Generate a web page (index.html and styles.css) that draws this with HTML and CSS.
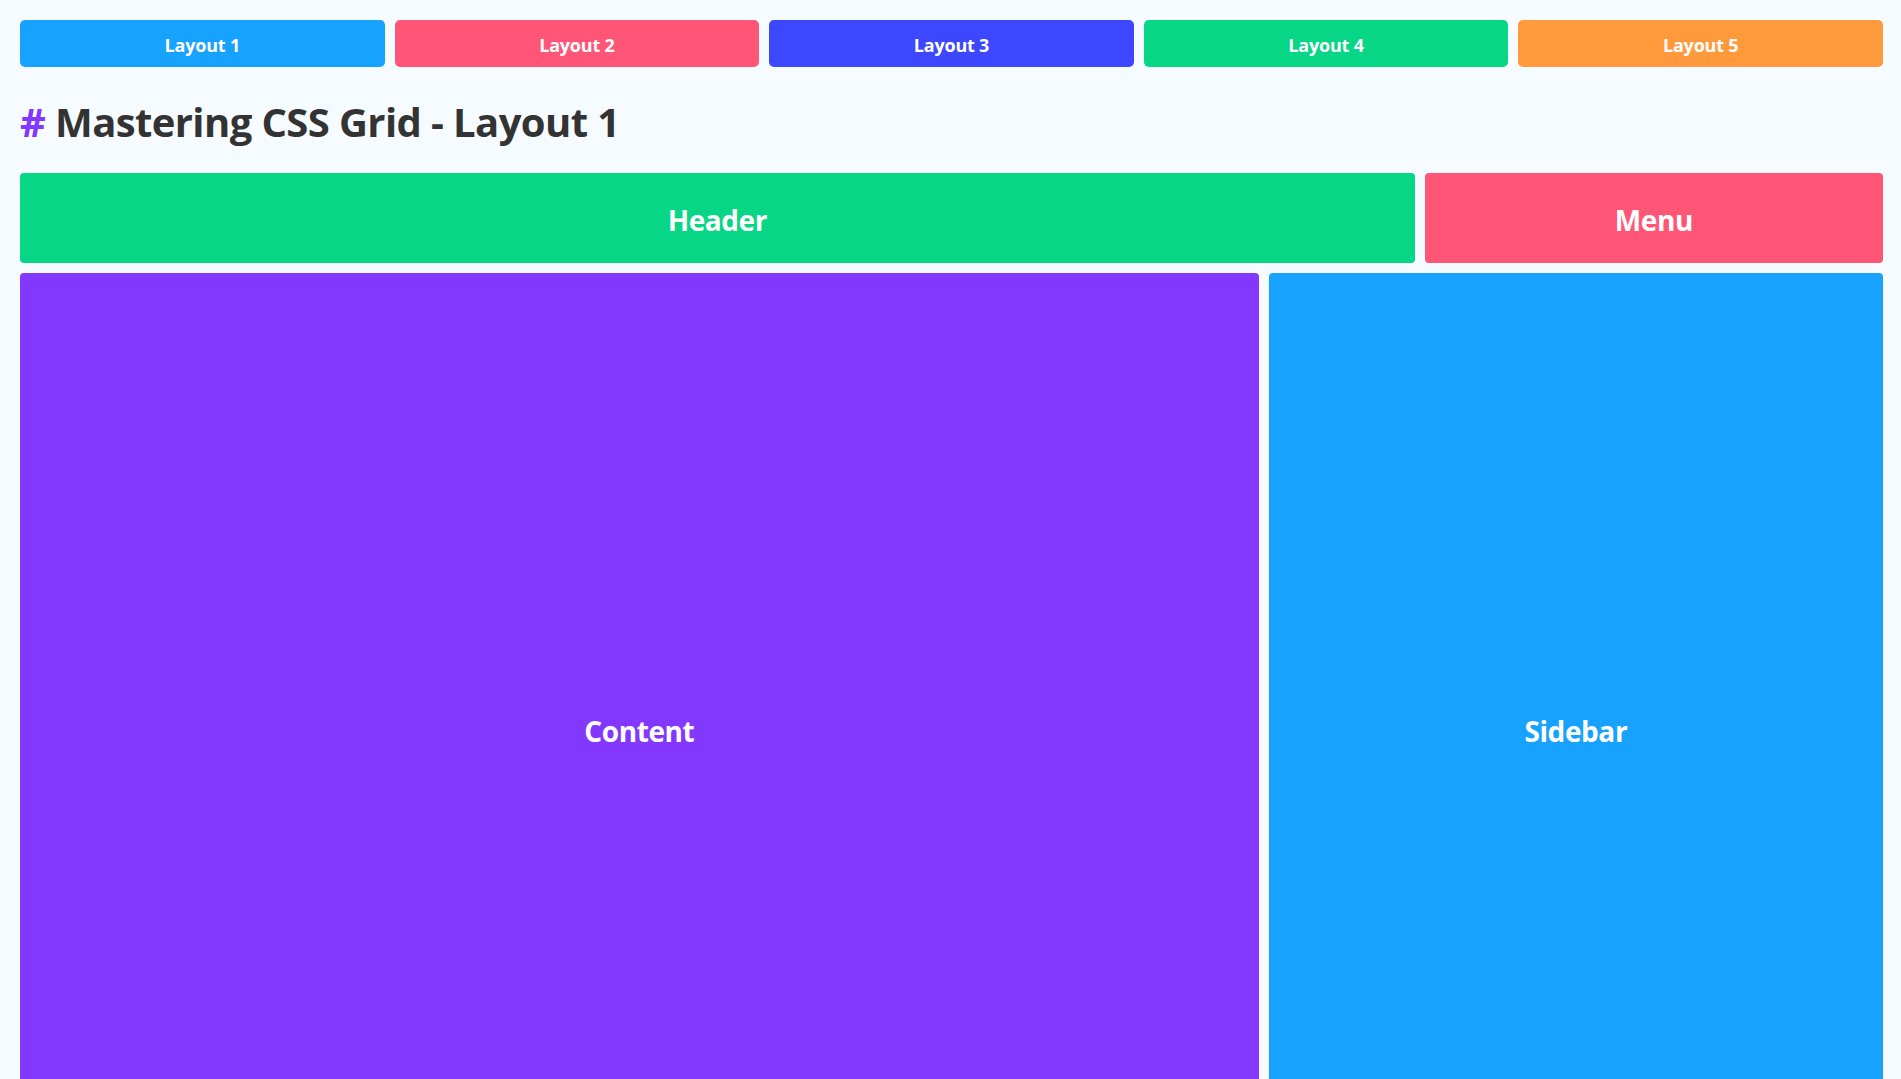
FILE: index.html
```html
<!DOCTYPE html>
<html lang="en">
<head>
<meta charset="utf-8">
<title>Mastering CSS Grid</title>
<link rel="stylesheet" href="styles.css">
</head>
<body>
<nav class="tabs">
  <button class="tab tab-blue">Layout 1</button>
  <button class="tab tab-pink">Layout 2</button>
  <button class="tab tab-indigo">Layout 3</button>
  <button class="tab tab-green">Layout 4</button>
  <button class="tab tab-orange">Layout 5</button>
</nav>
<h1 class="title"><span class="hash">#</span> Mastering CSS Grid - Layout 1</h1>
<main class="grid">
  <div class="cell cell-header">Header</div>
  <div class="cell cell-menu">Menu</div>
  <div class="cell cell-content">Content</div>
  <div class="cell cell-sidebar">Sidebar</div>
</main>
</body>
</html>
```
FILE: styles.css
```css
* { box-sizing: border-box; }
body {
  margin: 0;
  padding: 20px 18px 20px 20px;
  background: #f5fbff;
  font-family: "Open Sans", "Noto Sans", sans-serif;
  color: #333;
}
.tabs {
  display: flex;
  gap: 10px;
}
.tab {
  flex: 1;
  height: 47px;
  padding: 2px 0 0;
  border: 0;
  border-radius: 5px;
  color: #fff;
  font-family: "Open Sans", "Noto Sans", sans-serif;
  font-weight: 700;
  font-size: 18px;
  letter-spacing: -0.2px;
  cursor: pointer;
}
.tab-blue { background: #17a2ff; }
.tab-pink { background: #ff5678; }
.tab-indigo { background: #3c47ff; }
.tab-green { background: #06d685; }
.tab-orange { background: #ff9a3c; }
.title {
  margin: 31px 0 27px;
  font-size: 40px;
  line-height: 48px;
  font-weight: 700;
  letter-spacing: -0.6px;
  color: #333;
}
.hash { color: #8338ff; }
.grid {
  display: grid;
  grid-template-columns: repeat(12, 1fr);
  grid-template-rows: 90px 912px;
  gap: 10px;
}
.cell {
  display: flex;
  align-items: center;
  justify-content: center;
  padding-top: 3px;
  border-radius: 4px;
  color: #fff;
  font-weight: 700;
  font-size: 28px;
  letter-spacing: -0.4px;
}
.cell-header { grid-column: span 9; background: #06d685; }
.cell-menu { grid-column: span 3; background: #ff5678; }
.cell-content { grid-column: span 8; background: #8338ff; }
.cell-sidebar { grid-column: span 4; background: #17a2ff; }
```
